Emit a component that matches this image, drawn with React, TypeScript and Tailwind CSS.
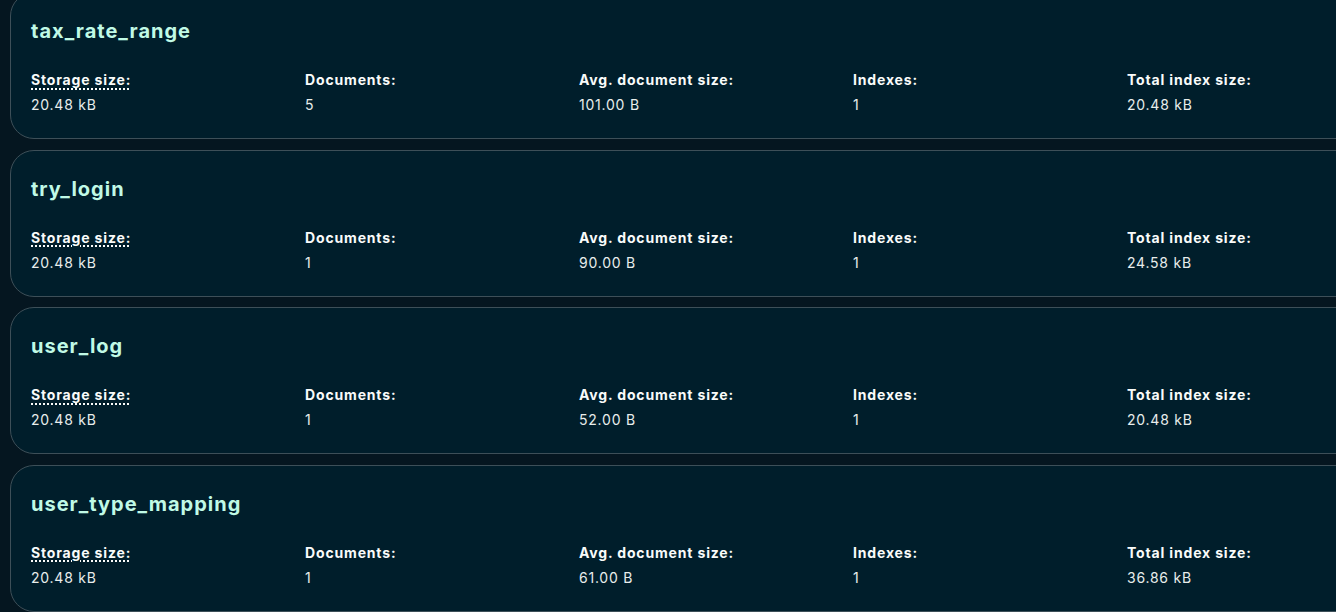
import React from "react";

type Coll = {
  name: string;
  storage: string;
  docs: string;
  avg: string;
  indexes: string;
  total: string;
};

const data: Coll[] = [
  { name: "tax_rate_range", storage: "20.48 kB", docs: "5", avg: "101.00 B", indexes: "1", total: "20.48 kB" },
  { name: "try_login", storage: "20.48 kB", docs: "1", avg: "90.00 B", indexes: "1", total: "24.58 kB" },
  { name: "user_log", storage: "20.48 kB", docs: "1", avg: "52.00 B", indexes: "1", total: "20.48 kB" },
  { name: "user_type_mapping", storage: "20.48 kB", docs: "1", avg: "61.00 B", indexes: "1", total: "36.86 kB" },
];

function Stat({ label, value, dotted }: { label: string; value: string; dotted?: boolean }) {
  return (
    <div className="flex flex-col gap-[5px]">
      <div className="text-[14px] leading-[20px] font-bold tracking-[0.06em] text-[#f9fbfa]">
        <span
          className={
            dotted
              ? "underline decoration-dotted decoration-[1.5px] underline-offset-[3px]"
              : ""
          }
        >
          {label}
        </span>
      </div>
      <div className="text-[14px] leading-[20px] tracking-[0.055em] text-[#e8edeb]">{value}</div>
    </div>
  );
}

function Card({ c }: { c: Coll }) {
  return (
    <div className="w-[1420px] h-[147px] shrink-0 rounded-[24px] border border-[#3d4f58] bg-[#001e2b] pl-[20px] pt-[24px]">
      <div className="text-[20px] leading-[28px] font-bold tracking-[0.05em] text-[#c0fae6]">{c.name}</div>
      <div className="mt-[25px] grid grid-cols-[repeat(5,274px)]">
        <Stat label="Storage size:" value={c.storage} dotted />
        <Stat label="Documents:" value={c.docs} />
        <Stat label="Avg. document size:" value={c.avg} />
        <Stat label="Indexes:" value={c.indexes} />
        <Stat label="Total index size:" value={c.total} />
      </div>
    </div>
  );
}

export default function App() {
  return (
    <div
      className="w-[1336px] h-[612px] overflow-hidden bg-[#051620]"
      style={{ fontFamily: "Inter, 'Noto Sans', sans-serif" }}
    >
      <div className="-mt-[8px] ml-[10px] flex flex-col gap-[10.5px]">
        {data.map((c) => (
          <Card key={c.name} c={c} />
        ))}
      </div>
    </div>
  );
}
